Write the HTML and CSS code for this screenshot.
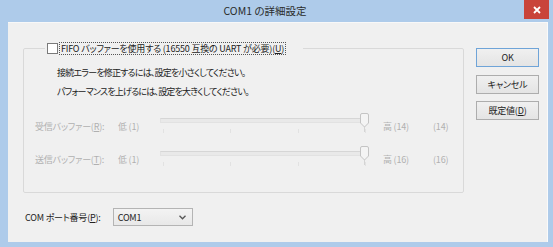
FILE: index.html
```html
<!DOCTYPE html>
<html lang="ja">
<head>
  <meta charset="UTF-8" />
  <meta name="viewport" content="width=device-width, initial-scale=1" />
  <title>COM1 の詳細設定</title>
  <link rel="stylesheet" href="styles.css">
</head>
<body>
  <div class="window">
    <div class="titlebar">
      <div class="title">COM1 の詳細設定</div>
      <div class="close">
        <svg width="8" height="8" viewBox="0 0 8 8"><path d="M1 1 L7 7 M7 1 L1 7" stroke="#fff" stroke-width="1.8"/></svg>
      </div>
    </div>

    <div class="client">
      <div class="main">
        <fieldset class="group">
          <legend>
            <span class="check"></span>
            <span class="check-label">FIFO バッファーを使用する (16550 互換の UART が必要)(<u>U</u>)</span>
          </legend>

          <p class="hint">接続エラーを修正するには、設定を小さくしてください。</p>
          <p class="hint">パフォーマンスを上げるには、設定を大きくしてください。</p>

          <!-- 受信 -->
          <div class="buffer-row">
            <span class="buffer-name">受信バッファー(<u>R</u>):</span>
            <span class="low">低 (1)</span>
            <div class="slider">
              <div class="track"></div>
              <div class="ticks"><i></i><i></i><i></i><i></i></div>
              <svg class="thumb" width="9" height="19" viewBox="0 0 9 19"><path d="M0.5 2 Q0.5 0.5 2 0.5 H7 Q8.5 0.5 8.5 2 V10 L4.5 14 L0.5 10 Z" fill="#f4f4f4" stroke="#c4c4c4"/><path d="M4.5 14 V19" stroke="#d4d4d4"/></svg>
            </div>
            <span class="high">高 (14)</span>
            <span class="value">(14)</span>
          </div>

          <!-- 送信 -->
          <div class="buffer-row">
            <span class="buffer-name">送信バッファー(<u>T</u>):</span>
            <span class="low">低 (1)</span>
            <div class="slider">
              <div class="track"></div>
              <div class="ticks"><i></i><i></i><i></i><i></i></div>
              <svg class="thumb" width="9" height="19" viewBox="0 0 9 19"><path d="M0.5 2 Q0.5 0.5 2 0.5 H7 Q8.5 0.5 8.5 2 V10 L4.5 14 L0.5 10 Z" fill="#f4f4f4" stroke="#c4c4c4"/><path d="M4.5 14 V19" stroke="#d4d4d4"/></svg>
            </div>
            <span class="high">高 (16)</span>
            <span class="value">(16)</span>
          </div>
        </fieldset>

        <div class="port-row">
          <span>COM ポート番号(<u>P</u>):</span>
          <div class="combo">
            <span>COM1</span>
            <svg width="7" height="5" viewBox="0 0 7 5"><path d="M0.5 0.8 L3.5 3.8 L6.5 0.8" fill="none" stroke="#555" stroke-width="1.3"/></svg>
          </div>
        </div>
      </div>

      <div class="buttons">
        <button type="button" class="default">OK</button>
        <button type="button">キャンセル</button>
        <button type="button">既定値(<u>D</u>)</button>
      </div>
    </div>
  </div>
</body>
</html>
```

FILE: styles.css
```css
body {
  margin: 0;
  font-family: "Noto Sans CJK JP", sans-serif;
  font-size: 9px;
  letter-spacing: -0.2px;
  font-feature-settings: "palt";
  color: #222;
  background-color: #aecbea;
}

.window {
  width: 553px;
  height: 247px;
  display: flex;
  flex-direction: column;
}

.titlebar {
  height: 22px;
  display: flex;
  align-items: flex-start;
  flex-shrink: 0;
}

.title {
  flex: 1;
  text-align: center;
  font-size: 10.5px;
  letter-spacing: 0;
  line-height: 22px;
  color: #2b2b2b;
  padding-left: 6px;
}

.close {
  width: 25px;
  height: 19px;
  margin-right: 4px;
  background-color: #c9443a;
  display: flex;
  align-items: center;
  justify-content: center;
}

.client {
  flex: 1;
  margin: 0 5px 5px 8px;
  background-color: #f0f0f0;
  border-top: 1px solid #f8f8f8;
  border-right: 1px solid #fafafa;
  padding: 18px 7px 0 15px;
  display: grid;
  grid-template-columns: 441px 63px;
  column-gap: 12px;
  align-items: start;
}

/* グループボックス */
.group {
  margin: 0;
  padding: 8px 0 16px 11px;
  border: 1px solid #d9d9d9;
  border-radius: 2px;
  min-width: 0;
}

.group legend {
  margin-left: 10px;
  padding: 0 17px 0 2px;
  height: 14px;
  display: flex;
  align-items: center;
  gap: 1px;
}

.check {
  width: 9px;
  height: 9px;
  border: 1px solid #7a7a7a;
  background-color: #fff;
}

.check-label {
  border: 1px dotted #555;
  padding: 0 1px;
  line-height: 11px;
}

.hint {
  margin: 0 0 0 22px;
  line-height: 19px;
  letter-spacing: -0.8px;
}

.buffer-row {
  display: grid;
  grid-template-columns: 83px 42px 210px 63px auto;
  align-items: center;
  height: 33px;
  color: #b0b0b0;
}

.buffer-row:first-of-type {
  margin-top: 9px;
}

.hint + .hint {
  margin-bottom: 9px;
}

.high {
  padding-left: 13px;
}

/* スライダー */
.slider {
  position: relative;
  height: 20px;
}

.track {
  margin-top: 1px;
  height: 3px;
  border: 1px solid #e2e2e2;
  border-top-color: #d6d6d6;
  background-color: #e9e9e9;
  margin-right: 8px;
}

.ticks {
  display: flex;
  justify-content: space-between;
  padding: 0 4px 0 3px;
  margin-top: 6px;
}

.ticks i {
  width: 1px;
  height: 4px;
  background-color: #e2e2e2;
}

.thumb {
  position: absolute;
  right: 1px;
  top: -4px;
}

/* COM ポート */
.port-row {
  display: flex;
  align-items: center;
  gap: 12px;
  margin-top: 15px;
  padding-left: 2px;
}

.combo {
  width: 80px;
  height: 18px;
  box-sizing: border-box;
  border: 1px solid #b4b4b4;
  background: linear-gradient(#f3f3f3, #e8e8e8);
  display: flex;
  align-items: center;
  justify-content: space-between;
  padding: 0 6px 0 4px;
}

/* ボタン */
.buttons {
  display: flex;
  flex-direction: column;
  gap: 7px;
  padding-top: 7px;
}

button {
  height: 19px;
  padding: 0;
  font-family: inherit;
  font-size: 9px;
  letter-spacing: -0.2px;
  font-feature-settings: "palt";
  color: #222;
  border: 1px solid #adadad;
  background: linear-gradient(#f0f0f0, #e4e4e4);
}

button.default {
  border-color: #6fa4d8;
  margin-bottom: 1px;
}
```
